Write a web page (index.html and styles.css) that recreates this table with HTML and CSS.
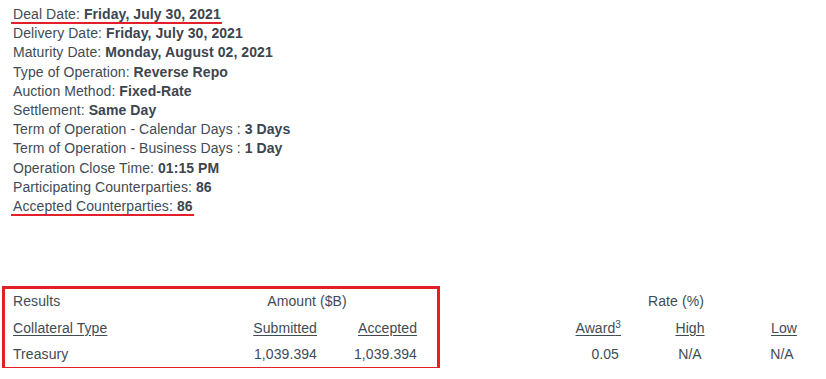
FILE: index.html
```html
<!DOCTYPE html>
<html lang="en">
<head>
<meta charset="utf-8">
<title>Operation Results</title>
<link rel="stylesheet" href="styles.css">
</head>
<body>
<div class="details">
  <div class="line"><span class="mark">Deal Date: <b>Friday, July 30, 2021</b></span></div>
  <div class="line">Delivery Date: <b>Friday, July 30, 2021</b></div>
  <div class="line">Maturity Date: <b>Monday, August 02, 2021</b></div>
  <div class="line">Type of Operation: <b>Reverse Repo</b></div>
  <div class="line">Auction Method: <b>Fixed-Rate</b></div>
  <div class="line">Settlement: <b>Same Day</b></div>
  <div class="line">Term of Operation - Calendar Days : <b>3 Days</b></div>
  <div class="line">Term of Operation - Business Days : <b>1 Day</b></div>
  <div class="line">Operation Close Time: <b>01:15 PM</b></div>
  <div class="line">Participating Counterparties: <b>86</b></div>
  <div class="line"><span class="mark">Accepted Counterparties: <b>86</b></span></div>
</div>

<div class="results">
  <div class="highlight-box"></div>
  <div class="cell c1">Results</div>
  <div class="cell amount">Amount ($B)</div>
  <div class="cell rate">Rate (%)</div>

  <div class="cell c1"><u>Collateral Type</u></div>
  <div class="cell c2 right"><u>Submitted</u></div>
  <div class="cell c3 right"><u>Accepted</u></div>
  <div class="cell c5 right"><u>Award<sup>3</sup></u></div>
  <div class="cell c6 center"><u>High</u></div>
  <div class="cell c7 center"><u>Low</u></div>

  <div class="cell c1">Treasury</div>
  <div class="cell c2 right">1,039.394</div>
  <div class="cell c3 right">1,039.394</div>
  <div class="cell c5 right award-val">0.05</div>
  <div class="cell c6 center">N/A</div>
  <div class="cell c7 center na-low">N/A</div>
</div>
</body>
</html>
```

FILE: styles.css
```css
html, body {
  margin: 0;
  padding: 0;
  background: #ffffff;
}

body {
  font-family: "Liberation Sans", Arial, sans-serif;
  font-size: 14px;
  color: #414b56;
  letter-spacing: 0.08px;
}

b {
  font-weight: bold;
  color: #3b4550;
}

.details {
  padding: 5px 0 0 13px;
}

.line {
  line-height: 19.2px;
  white-space: nowrap;
}

.mark {
  border-bottom: 2px solid #e3202a;
  margin-left: -2px;
  padding: 0 1px 0 2px;
}

.results {
  position: relative;
  margin-top: 72px;
  display: grid;
  grid-template-columns: 13px 184px 120px 100px 126px 78px 138px 50px;
  grid-auto-rows: 26.7px;
  align-items: center;
  line-height: 19.2px;
  white-space: nowrap;
}

.highlight-box {
  position: absolute;
  left: 2px;
  top: -2.5px;
  width: 432px;
  height: 78px;
  border: 3px solid #e3202a;
  pointer-events: none;
}

.c1 { grid-column: 2; }
.c2 { grid-column: 3; }
.c3 { grid-column: 4; }
.c5 { grid-column: 6; }
.c6 { grid-column: 7; }
.c7 { grid-column: 8; }

.amount {
  grid-column: 3 / 5;
  text-align: center;
}

.rate {
  grid-column: 6 / 9;
  text-align: center;
}

.right { text-align: right; }
.center { text-align: center; }

.award-val { padding-right: 2px; }
.na-low { padding-right: 4px; }

u {
  text-decoration: underline;
  text-underline-offset: 2px;
}

sup {
  font-size: 10px;
  line-height: 0;
  vertical-align: 5px;
}
```
